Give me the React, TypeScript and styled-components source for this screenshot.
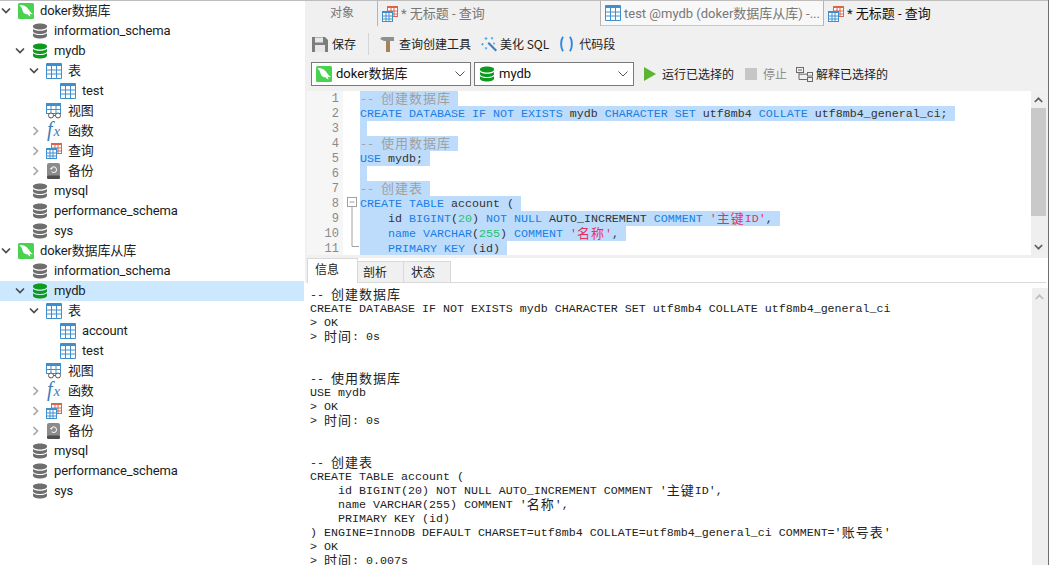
import React from "react";
import styled, { createGlobalStyle } from "styled-components";

const Global = createGlobalStyle`
  html, body { margin: 0; padding: 0; background: #fff; overflow: hidden; }
  #root { width: 1051px; height: 565px; }
`;

const UI = `Roboto, "Noto Sans CJK SC", sans-serif`;
const CJK = `"Noto Sans CJK SC", sans-serif`;
const MONO = `"Liberation Mono", "Noto Sans CJK SC", monospace`;

const Page = styled.div`
  width: 1051px;
  height: 565px;
  display: flex;
  overflow: hidden;
  background: #fff;
`;
const Sidebar = styled.aside`
  width: 305px;
  flex: none;
  border-top: 1px solid #bdbdbd;
  box-sizing: border-box;
  background: #fff;
  padding-right: 1px;
`;
const Row = styled.div<{ $depth: number; $selected?: boolean }>`
  height: 20px;
  display: flex;
  align-items: center;
  padding-left: ${(p) => p.$depth * 14}px;
  background: ${(p) => (p.$selected ? "#cce8ff" : "transparent")};
`;
const ChevronSlot = styled.span`
  width: 18px;
  height: 20px;
  flex: none;
  display: flex;
  align-items: center;
  justify-content: flex-start;
  padding-left: 1px;
  box-sizing: border-box;
`;
const RowLabel = styled.span`
  margin-left: 6px;
  padding-bottom: 1px;
  font: 13px/19px ${UI};
  letter-spacing: -0.15px;
  color: #1c1c1c;
  white-space: nowrap;
`;
const Main = styled.main`
  width: 743px;
  flex: none;
  background: #f0f0f0;
  border-right: 1px solid #6e6e6e;
  display: flex;
  flex-direction: column;
`;
const TabBar = styled.div`
  height: 26px;
  flex: none;
  display: flex;
  border-top: 1px solid #bdbdbd;
  box-sizing: border-box;
`;
const QueryTab = styled.div<{ $width: number; $state: "plain" | "open" | "active" }>`
  width: ${(p) => p.$width}px;
  flex: none;
  display: flex;
  align-items: center;
  gap: 3px;
  padding-left: 4px;
  box-sizing: border-box;
  font: 13px/25px ${UI};
  white-space: nowrap;
  overflow: hidden;
  color: ${(p) => (p.$state === "active" ? "#111" : "#777")};
  background: ${(p) => (p.$state === "open" ? "#f8f8f8" : "transparent")};
  border-right: ${(p) => (p.$state === "active" ? "none" : "1px solid #b4b4b4")};
  border-bottom: ${(p) => (p.$state === "open" ? "1px solid #c8c8c8" : "none")};
`;
const ObjectLabel = styled.span`
  margin-left: 21px;
  font-size: 12px;
`;
const Toolbar = styled.div`
  height: 26px;
  margin-top: 5px;
  flex: none;
  display: flex;
  align-items: center;
  padding-left: 7px;
  font: 12px/26px ${CJK};
  color: #222;
`;
const ToolButton = styled.span<{ $gap?: number; $after?: number; $muted?: boolean }>`
  display: flex;
  align-items: center;
  gap: ${(p) => p.$gap ?? 4}px;
  margin-right: ${(p) => p.$after ?? 0}px;
  color: ${(p) => (p.$muted ? "#8c8c8c" : "#222")};
  white-space: nowrap;
`;
const ToolSep = styled.span`
  width: 1px;
  height: 22px;
  background: #d5d5d5;
  margin-right: 11px;
`;
const SelectBar = styled.div`
  height: 24px;
  margin-top: 5px;
  flex: none;
  display: flex;
  align-items: center;
  padding-left: 6px;
  font: 12px/24px ${CJK};
  color: #222;
`;
const Select = styled.div<{ $width: number; $after: number }>`
  width: ${(p) => p.$width}px;
  height: 24px;
  margin-right: ${(p) => p.$after}px;
  flex: none;
  box-sizing: border-box;
  background: #fff;
  border: 1px solid #7a7a7a;
  display: flex;
  align-items: center;
  padding: 0 4px;
  gap: 4px;
  font: 13px/22px ${UI};
  color: #111;
`;
const SelectText = styled.span`
  flex: 1;
`;
const Editor = styled.section`
  height: 164px;
  margin: 5px 1px 0 2px;
  flex: none;
  display: flex;
  background: #fff;
  overflow: hidden;
`;
const Gutter = styled.div`
  width: 36px;
  flex: none;
  background: #f6f6f6;
`;
const LineNo = styled.div`
  height: 15px;
  padding-right: 4px;
  text-align: right;
  font: 12px/17px ${MONO};
  color: #8a8a8a;
`;
const FoldCol = styled.div`
  width: 17px;
  flex: none;
  position: relative;
`;
const FoldMark = styled.svg`
  position: absolute;
  left: 4px;
  top: 106px;
`;
const Code = styled.div`
  flex: 1;
  min-width: 0;
  overflow: hidden;
`;
const CodeLine = styled.div`
  height: 15px;
  white-space: pre;
  font: 11.67px/15px ${MONO};
  color: #333;
`;
const Selection = styled.span`
  display: inline-block;
  height: 15px;
  line-height: 17px;
  background: #bddcfb;
  vertical-align: top;
`;
const Tok = styled.span<{ $k: "kw" | "cm" | "num" | "str" }>`
  color: ${(p) =>
    ({ kw: "#1480e8", cm: "#a0a0a0", num: "#1fc26b", str: "#e8305e" }[p.$k])};
`;
const CjkRun = styled.span`
  font-family: ${CJK};
  font-size: 13px;
  letter-spacing: 1px;
  line-height: 0;
  vertical-align: -1px;
`;
const ScrollBar = styled.div`
  width: 16px;
  flex: none;
  background: #efefef;
  display: flex;
  flex-direction: column;
  align-items: center;
`;
const ScrollArrow = styled.div`
  height: 17px;
  flex: none;
  padding-right: 1px;
  display: flex;
  align-items: center;
  justify-content: center;
`;
const ScrollThumb = styled.div`
  width: 15px;
  height: 108px;
  margin-right: 1px;
  background: #c9c9c9;
  flex: none;
`;
const ScrollRest = styled.div`
  flex: 1;
`;
const Results = styled.section`
  margin-top: 3px;
  flex: 1;
  min-height: 0;
  background: #fff;
  display: flex;
  flex-direction: column;
`;
const ResultTabs = styled.div`
  height: 25px;
  flex: none;
  margin-right: 2px;
  border-left: 2px solid #f0f0f0;
  display: flex;
  align-items: flex-end;
  box-shadow: inset 0 -1px 0 #d9d9d9;
`;
const ResultTab = styled.div<{ $active?: boolean; $width: number; $pad: number }>`
  width: ${(p) => p.$width}px;
  height: ${(p) => (p.$active ? 25 : 22)}px;
  box-sizing: border-box;
  padding-left: ${(p) => p.$pad}px;
  font: 12px/20px ${CJK};
  color: #222;
  background: ${(p) => (p.$active ? "#fff" : "#f0f0f0")};
  border: 1px solid #d9d9d9;
  border-bottom: ${(p) => (p.$active ? "none" : "1px solid #d9d9d9")};
  border-left: ${(p) => (p.$active ? "1px solid #d9d9d9" : "none")};
`;
const ResultBody = styled.div`
  flex: 1;
  min-height: 0;
  margin-top: 5px;
  display: flex;
  overflow: hidden;
`;
const Messages = styled.div`
  flex: 1;
  padding-left: 5px;
  overflow: hidden;
`;
const MsgLine = styled.div`
  height: 14px;
  white-space: pre;
  font: 11.67px/15px ${MONO};
  color: #222;
`;

/* ---------- icons ---------- */
const Chevron = ({ open }: { open: boolean }) =>
  open ? (
    <svg width="10" height="8" viewBox="0 0 10 8">
      <path d="M1 1.5 5 5.5 9 1.5" fill="none" stroke="#4a4a4a" strokeWidth="1.7" />
    </svg>
  ) : (
    <svg width="10" height="10" viewBox="0 0 10 10" style={{ marginLeft: 2 }}>
      <path d="M2.5 1 6.5 5 2.5 9" fill="none" stroke="#a8a8a8" strokeWidth="1.7" />
    </svg>
  );

const DolphinIcon = () => (
  <svg width="16" height="16" viewBox="0 0 16 16" style={{ flex: "none" }}>
    <rect width="16" height="16" rx="1.5" fill="#47d34f" />
    <path
      d="M1.5 2.2C4 1.6 7 2.6 9 4.6c1.6 1.6 2.4 3.4 4 5 .6.6 1.2 1 1.8 1.4-1.2.5-2.4.3-3.2-.2.1 1 .6 2 1.2 2.8-1.3-.3-2.6-1.2-3.2-2.4-1.6.2-3.4-.6-4.4-2C4.200 7 4 5.600 3.400 4.600 2.900 3.800 2.200 3 1.500 2.200Z"
      fill="#fff"
    />
  </svg>
);

const DbIcon = ({ color }: { color: string }) => (
  <svg width="16" height="16" viewBox="0 0 16 16" style={{ flex: "none" }}>
    <path
      d="M1 3.200C1 1.600 4 .5 8 .5s7 1.100 7 2.700v.6c0 1.600-3 2.700-7 2.700S1 5.400 1 3.800Z"
      fill={color}
    />
    <path
      d="M1 6c1.200 1.200 3.800 1.800 7 1.800S13.800 7.200 15 6v2.200c0 1.600-3 2.700-7 2.700S1 9.800 1 8.200Z"
      fill={color}
    />
    <path
      d="M1 10.300c1.200 1.200 3.800 1.800 7 1.800s5.800-.6 7-1.800v2.500c0 1.600-3 2.700-7 2.700s-7-1.100-7-2.700Z"
      fill={color}
    />
  </svg>
);

const TableIcon = () => (
  <svg width="16" height="16" viewBox="0 0 16 16" style={{ flex: "none" }}>
    <rect x="0" y="0" width="16" height="16" rx="1" fill="#3f8fce" />
    <rect x="1" y="3" width="14" height="12" fill="#fff" />
    <path d="M5.500 3v12M10.500 3v12M1 7h14M1 11h14" stroke="#3f8fce" strokeWidth="1" />
  </svg>
);

const ViewIcon = () => (
  <svg width="16" height="16" viewBox="0 0 16 16" style={{ flex: "none" }}>
    <rect x="0" y="0" width="15" height="11" fill="#3f8fce" />
    <rect x="1" y="3" width="13" height="7" fill="#fff" />
    <path d="M5 3v7M10 3v7M1 6.500h13" stroke="#3f8fce" />
    <circle cx="5" cy="12.500" r="2.500" fill="#fff" stroke="#555" />
    <circle cx="12" cy="12.500" r="2.500" fill="#fff" stroke="#555" />
    <path d="M7.500 12.500h2" stroke="#555" />
  </svg>
);

const FxIcon = () => (
  <svg width="16" height="16" viewBox="0 0 16 16" style={{ flex: "none", overflow: "visible" }}>
    <text
      x="1"
      y="13"
      fontFamily="'Liberation Serif', serif"
      fontStyle="italic"
      fontSize="20"
      fill="#3b7fb8"
    >
      f
      <tspan fontSize="15" dx="1">
        x
      </tspan>
    </text>
  </svg>
);

const QueryIcon = () => (
  <svg width="16" height="16" viewBox="0 0 16 16" style={{ flex: "none" }}>
    <rect x="5" y="0" width="11" height="11" fill="#d9654a" />
    <rect x="6" y="2" width="9" height="8" fill="#fff" />
    <path d="M9 2v8M12 2v8M6 5h9M6 8h9" stroke="#d9654a" />
    <rect x="0" y="5" width="11" height="11" fill="#3f8fce" />
    <rect x="1" y="7" width="9" height="8" fill="#fff" />
    <path d="M4 7v8M7 7v8M1 10h9M1 13h9" stroke="#3f8fce" />
  </svg>
);

const BackupIcon = () => (
  <svg width="16" height="16" viewBox="0 0 16 16" style={{ flex: "none" }}>
    <rect x="1" y="0" width="13" height="16" rx="2" fill="#8b8b8b" />
    <rect x="1" y="12.500" width="13" height="3.500" rx="1.500" fill="#4f4f4f" />
    <path d="M5.200 5.500a2.800 2.800 0 1 1 .4 3" fill="none" stroke="#eee" strokeWidth="1.100" />
    <path d="M3.800 5h3l-1.500 2Z" fill="#eee" />
  </svg>
);

const SaveIcon = () => (
  <svg width="16" height="16" viewBox="0 0 16 16" style={{ flex: "none" }}>
    <path d="M0 1h13l3 3v12H0Z" fill="#7d7d7d" />
    <rect x="3" y="1.500" width="8" height="5" fill="#e8e8e8" />
    <rect x="3" y="9" width="10" height="7" fill="#e8e8e8" />
  </svg>
);

const HammerIcon = () => (
  <svg width="14" height="16" viewBox="0 0 14 16" style={{ flex: "none" }}>
    <path d="M0 3 2 1h12v4H4Z" fill="#8f8f8f" />
    <rect x="6" y="5" width="4" height="11" fill="#a5825a" />
  </svg>
);

const WandIcon = () => (
  <svg width="16" height="16" viewBox="0 0 16 16" style={{ flex: "none" }}>
    <path d="M6.500 7.500 8 6l8 8-1.500 1.500Z" fill="#3f7fb8" />
    <path
      d="M5 1v3M3.500 2.500h3M1.500 7v2.500M.2 8.200h2.600M11 1v2.500M9.800 2.200h2.400M5 11v2.500M3.800 12.200h2.400M13 6.500v2M12 7.500h2"
      stroke="#4db0e8"
      strokeWidth="1.100"
    />
  </svg>
);

const ParensIcon = () => (
  <svg width="15" height="16" viewBox="0 0 15 16" style={{ flex: "none" }}>
    <path
      d="M4 .8C1.500 4.500 1.500 11.500 4 15.200M11 .8c2.500 3.700 2.500 10.700 0 14.400"
      fill="none"
      stroke="#2b87e0"
      strokeWidth="1.900"
    />
  </svg>
);

const PlayIcon = () => (
  <svg width="12" height="14" viewBox="0 0 12 14" style={{ flex: "none" }}>
    <path d="M0 0 12 7 0 14Z" fill="#5cb531" />
  </svg>
);

const StopIcon = styled.span`
  width: 12px;
  height: 12px;
  background: #c6c6c6;
  flex: none;
`;

const ExplainIcon = () => (
  <svg width="17" height="15" viewBox="0 0 17 15" style={{ flex: "none" }}>
    <g fill="none" stroke="#6b6b6b">
      <rect x=".5" y=".5" width="7" height="5" />
      <rect x="11.500" y="5.500" width="5" height="3.500" />
      <rect x="11.500" y="10.500" width="5" height="4" />
      <path d="M3 5.500V12.500h8.500M3 7.200h8.500M2 3h4" />
    </g>
  </svg>
);

const UpArrow = ({ c }: { c: string }) => (
  <svg width="9" height="6" viewBox="0 0 9 6">
    <path d="M.8 5 4.500 1.300 8.200 5" fill="none" stroke={c} strokeWidth="1.700" />
  </svg>
);
const DownArrow = ({ c }: { c: string }) => (
  <svg width="9" height="6" viewBox="0 0 9 6">
    <path d="M.8 1 4.500 4.700 8.200 1" fill="none" stroke={c} strokeWidth="1.700" />
  </svg>
);
const SelectChevron = () => (
  <svg width="10" height="6" viewBox="0 0 10 6" style={{ flex: "none", marginRight: 1 }}>
    <path d="M.5.500 5 5 9.500.500" fill="none" stroke="#555" strokeWidth="1" />
  </svg>
);

/* ---------- data ---------- */
type IconKind = "conn" | "db" | "active" | "table" | "view" | "fx" | "query" | "backup";
type Node = { d: number; c?: "open" | "closed"; i: IconKind; t: string; sel?: boolean };

const iconFor = (k: IconKind) =>
  ({
    conn: <DolphinIcon />,
    db: <DbIcon color="#6e6e6e" />,
    active: <DbIcon color="#0e9a1e" />,
    table: <TableIcon />,
    view: <ViewIcon />,
    fx: <FxIcon />,
    query: <QueryIcon />,
    backup: <BackupIcon />,
  }[k]);

const tree: Node[] = [
  { d: 0, c: "open", i: "conn", t: "doker数据库" },
  { d: 1, i: "db", t: "information_schema" },
  { d: 1, c: "open", i: "active", t: "mydb" },
  { d: 2, c: "open", i: "table", t: "表" },
  { d: 3, i: "table", t: "test" },
  { d: 2, i: "view", t: "视图" },
  { d: 2, c: "closed", i: "fx", t: "函数" },
  { d: 2, c: "closed", i: "query", t: "查询" },
  { d: 2, c: "closed", i: "backup", t: "备份" },
  { d: 1, i: "db", t: "mysql" },
  { d: 1, i: "db", t: "performance_schema" },
  { d: 1, i: "db", t: "sys" },
  { d: 0, c: "open", i: "conn", t: "doker数据库从库" },
  { d: 1, i: "db", t: "information_schema" },
  { d: 1, c: "open", i: "active", t: "mydb", sel: true },
  { d: 2, c: "open", i: "table", t: "表" },
  { d: 3, i: "table", t: "account" },
  { d: 3, i: "table", t: "test" },
  { d: 2, i: "view", t: "视图" },
  { d: 2, c: "closed", i: "fx", t: "函数" },
  { d: 2, c: "closed", i: "query", t: "查询" },
  { d: 2, c: "closed", i: "backup", t: "备份" },
  { d: 1, i: "db", t: "mysql" },
  { d: 1, i: "db", t: "performance_schema" },
  { d: 1, i: "db", t: "sys" },
];

const Mixed = ({ text }: { text: string }) => (
  <>
    {text.split(/([\u4e00-\u9fff]+)/).map((part, i) =>
      i % 2 ? <CjkRun key={i}>{part}</CjkRun> : <React.Fragment key={i}>{part}</React.Fragment>
    )}
  </>
);

type Part = [string, ("kw" | "cm" | "num" | "str")?];
const code: Part[][] = [
  [["-- ", "cm"], ["创建数据库", "cm"]],
  [
    ["CREATE DATABASE IF NOT EXISTS", "kw"],
    [" mydb "],
    ["CHARACTER SET", "kw"],
    [" utf8mb4 "],
    ["COLLATE", "kw"],
    [" utf8mb4_general_ci;"],
  ],
  [],
  [["-- 使用数据库", "cm"]],
  [["USE", "kw"], [" mydb;"]],
  [],
  [["-- 创建表", "cm"]],
  [["CREATE TABLE", "kw"], [" account ("]],
  [
    ["    id "],
    ["BIGINT", "kw"],
    ["("],
    ["20", "num"],
    [") "],
    ["NOT NULL", "kw"],
    [" AUTO_INCREMENT "],
    ["COMMENT", "kw"],
    [" "],
    ["'主键ID'", "str"],
    [","],
  ],
  [
    ["    "],
    ["name VARCHAR", "kw"],
    ["("],
    ["255", "num"],
    [") "],
    ["COMMENT", "kw"],
    [" "],
    ["'名称'", "str"],
    [","],
  ],
  [["    "], ["PRIMARY KEY", "kw"], [" (id)"]],
];

const messages = [
  "-- 创建数据库",
  "CREATE DATABASE IF NOT EXISTS mydb CHARACTER SET utf8mb4 COLLATE utf8mb4_general_ci",
  "> OK",
  "> 时间: 0s",
  "",
  "",
  "-- 使用数据库",
  "USE mydb",
  "> OK",
  "> 时间: 0s",
  "",
  "",
  "-- 创建表",
  "CREATE TABLE account (",
  "    id BIGINT(20) NOT NULL AUTO_INCREMENT COMMENT '主键ID',",
  "    name VARCHAR(255) COMMENT '名称',",
  "    PRIMARY KEY (id)",
  ") ENGINE=InnoDB DEFAULT CHARSET=utf8mb4 COLLATE=utf8mb4_general_ci COMMENT='账号表'",
  "> OK",
  "> 时间: 0.007s",
];

export default function App() {
  return (
    <Page>
      <Global />
      <Sidebar>
        {tree.map((n, i) => (
          <Row key={i} $depth={n.d} $selected={n.sel}>
            <ChevronSlot>{n.c && <Chevron open={n.c === "open"} />}</ChevronSlot>
            {iconFor(n.i)}
            <RowLabel>{n.t}</RowLabel>
          </Row>
        ))}
      </Sidebar>
      <Main>
        <TabBar>
          <QueryTab $width={73} $state="plain">
            <ObjectLabel>对象</ObjectLabel>
          </QueryTab>
          <QueryTab $width={223} $state="plain">
            <QueryIcon />* 无标题 - 查询
          </QueryTab>
          <QueryTab $width={223} $state="open">
            <TableIcon />
            test @mydb (doker数据库从库) -...
          </QueryTab>
          <QueryTab $width={224} $state="active">
            <QueryIcon />* 无标题 - 查询
          </QueryTab>
        </TabBar>
        <Toolbar>
          <ToolButton $after={12}>
            <SaveIcon />保存
          </ToolButton>
          <ToolSep />
          <ToolButton $gap={5} $after={10}>
            <HammerIcon />查询创建工具
          </ToolButton>
          <ToolButton $gap={3} $after={10}>
            <WandIcon />美化 SQL
          </ToolButton>
          <ToolButton $gap={5}>
            <ParensIcon />代码段
          </ToolButton>
        </Toolbar>
        <SelectBar>
          <Select $width={160} $after={3}>
            <DolphinIcon />
            <SelectText>doker数据库</SelectText>
            <SelectChevron />
          </Select>
          <Select $width={160} $after={10}>
            <DbIcon color="#0e9a1e" />
            <SelectText>mydb</SelectText>
            <SelectChevron />
          </Select>
          <ToolButton $gap={6} $after={11}>
            <PlayIcon />运行已选择的
          </ToolButton>
          <ToolButton $gap={6} $after={9} $muted>
            <StopIcon />停止
          </ToolButton>
          <ToolButton $gap={3}>
            <ExplainIcon />解释已选择的
          </ToolButton>
        </SelectBar>
        <Editor>
          <Gutter>
            {code.map((_, i) => (
              <LineNo key={i}>{i + 1}</LineNo>
            ))}
          </Gutter>
          <FoldCol>
            <FoldMark width="13" height="52" viewBox="0 0 13 52">
              <rect x=".5" y=".5" width="9" height="9" fill="#fff" stroke="#a0a0a0" />
              <path d="M2.500 5h5M5 10v39.500h7" fill="none" stroke="#a0a0a0" />
            </FoldMark>
          </FoldCol>
          <Code>
            {code.map((parts, i) => (
              <CodeLine key={i}>
                <Selection>
                  {parts.map(([text, kind], j) =>
                    kind ? (
                      <Tok key={j} $k={kind}>
                        <Mixed text={text} />
                      </Tok>
                    ) : (
                      <Mixed key={j} text={text} />
                    )
                  )}
                  {"\u00a0"}
                </Selection>
              </CodeLine>
            ))}
          </Code>
          <ScrollBar>
            <ScrollArrow>
              <UpArrow c="#606060" />
            </ScrollArrow>
            <ScrollThumb />
            <ScrollRest />
            <ScrollArrow>
              <DownArrow c="#606060" />
            </ScrollArrow>
          </ScrollBar>
        </Editor>
        <Results>
          <ResultTabs>
            <ResultTab $active $width={51} $pad={7}>
              信息
            </ResultTab>
            <ResultTab $width={46} $pad={5}>
              剖析
            </ResultTab>
            <ResultTab $width={47} $pad={7}>
              状态
            </ResultTab>
          </ResultTabs>
          <ResultBody>
            <Messages>
              {messages.map((m, i) => (
                <MsgLine key={i}>
                  <Mixed text={m} />
                </MsgLine>
              ))}
            </Messages>
            <ScrollBar>
              <ScrollArrow>
                <UpArrow c="#bdbdbd" />
              </ScrollArrow>
            </ScrollBar>
          </ResultBody>
        </Results>
      </Main>
    </Page>
  );
}
